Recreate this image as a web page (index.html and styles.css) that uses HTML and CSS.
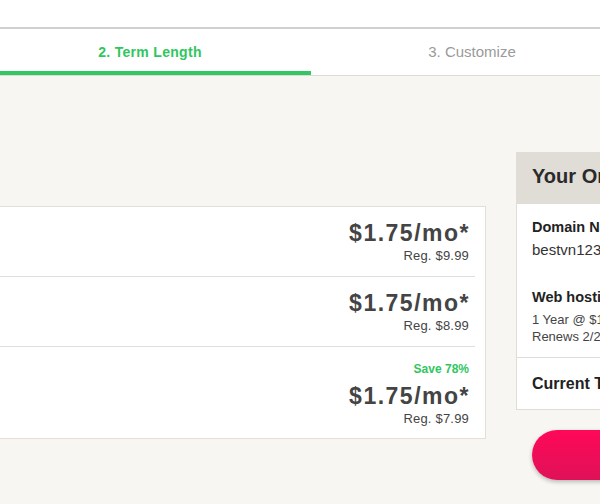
FILE: index.html
```html
<!DOCTYPE html>
<html>
<head>
<meta charset="utf-8">
<link rel="stylesheet" href="styles.css">
</head>
<body>
<header class="topbar"></header>
<nav class="steps">
  <div class="step step-active">2. Term Length</div>
  <div class="step">3. Customize</div>
</nav>
<main class="layout">
  <section class="plans">
    <div class="plan">
      <div class="price">$1.75/mo*</div>
      <div class="reg">Reg. $9.99</div>
    </div>
    <div class="plan">
      <div class="price">$1.75/mo*</div>
      <div class="reg">Reg. $8.99</div>
    </div>
    <div class="plan plan-last">
      <div class="save">Save 78%</div>
      <div class="price">$1.75/mo*</div>
      <div class="reg">Reg. $7.99</div>
    </div>
  </section>
  <aside class="order">
    <div class="order-box">
      <h2 class="order-title">Your Order Summary</h2>
      <div class="order-section">
        <div class="label">Domain Name</div>
        <div class="value">bestvn123.com</div>
        <div class="label label-gap">Web hosting</div>
        <div class="small">1 Year @ $1.75/mo</div>
        <div class="small">Renews 2/25/2026</div>
      </div>
      <div class="order-total">Current Total</div>
    </div>
    <button class="cta">Continue</button>
  </aside>
</main>
</body>
</html>
```

FILE: styles.css
```css
* { box-sizing: border-box; }
html, body { margin: 0; padding: 0; }
body {
  background: #f7f6f3;
  font-family: "Liberation Sans", Arial, sans-serif;
  color: #222;
  width: 600px;
  height: 504px;
  overflow: hidden;
}
.topbar {
  height: 29px;
  background: #fff;
  border-bottom: 2px solid #d0d0d0;
  box-shadow: 0 1px 1px rgba(0,0,0,0.06);
}
.steps {
  display: flex;
  height: 47px;
  background: #fff;
  border-bottom: 1px solid #dedad4;
  margin-left: -11px;
}
.step {
  flex: 0 0 322px;
  height: 46px;
  padding-top: 2px;
  line-height: 42px;
  text-align: center;
  font-size: 15px;
  color: #9a9a9a;
  border-bottom: 4px solid transparent;
}
.step-active {
  color: #2fc65e;
  font-weight: bold;
  font-size: 14px;
  letter-spacing: 0.3px;
  border-bottom-color: #33c764;
}
.layout {
  display: flex;
  align-items: flex-start;
  gap: 30px;
  padding-top: 76px;
  margin-left: -40px;
}
.plans {
  flex: 0 0 526px;
  margin-top: 54px;
  background: #fff;
  border: 1px solid #e3dfd8;
}
.plan {
  margin-right: 10px;
  border-bottom: 1px solid #e3dfd8;
  padding: 13px 6px 11px 0;
  text-align: right;
  height: 70px;
}
.plan-last {
  border-bottom: none;
  height: 91px;
  padding-top: 14px;
}
.price {
  font-size: 23px;
  font-weight: bold;
  line-height: 26px;
  color: #444;
  letter-spacing: 1.5px;
  margin-right: -1px;
}
.reg {
  font-size: 13px;
  line-height: 16px;
  margin-top: 2px;
  color: #444;
  letter-spacing: 0.2px;
}
.save {
  font-size: 12px;
  font-weight: bold;
  line-height: 16px;
  color: #2fc65e;
  margin-bottom: 6px;
}
.order {
  flex: 0 0 300px;
}
.order-box {
  background: #fff;
  border: 1px solid #e0dcd6;
}
.order-title {
  margin: 0;
  background: #e0dcd6;
  font-size: 20px;
  line-height: 24px;
  padding: 11px 15px 16px;
  color: #2a2a2a;
  white-space: nowrap;
}
.order-section {
  padding: 13px 15px 12px;
  border-bottom: 1px solid #e0dcd6;
}
.label {
  font-size: 14.5px;
  font-weight: bold;
  line-height: 20px;
  color: #222;
  white-space: nowrap;
}
.label-gap { margin-top: 27px; }
.value {
  font-size: 15px;
  line-height: 20px;
  margin-top: 3px;
  color: #333;
  white-space: nowrap;
}
.small {
  font-size: 13px;
  line-height: 17px;
  color: #444;
  white-space: nowrap;
}
.label-gap + .small { margin-top: 4px; }
.order-total {
  padding: 16px 15px 15px;
  font-size: 16px;
  font-weight: bold;
  line-height: 20px;
  color: #222;
  white-space: nowrap;
}
.cta {
  display: block;
  margin: 20px 0 0 16px;
  width: 260px;
  height: 50px;
  border: none;
  border-radius: 25px;
  background: linear-gradient(#ff0858, #df1158);
  box-shadow: 0 2px 4px rgba(0,0,0,0.25);
  color: #fff;
  font-family: "Liberation Sans", Arial, sans-serif;
  font-size: 16px;
  font-weight: bold;
}
```
